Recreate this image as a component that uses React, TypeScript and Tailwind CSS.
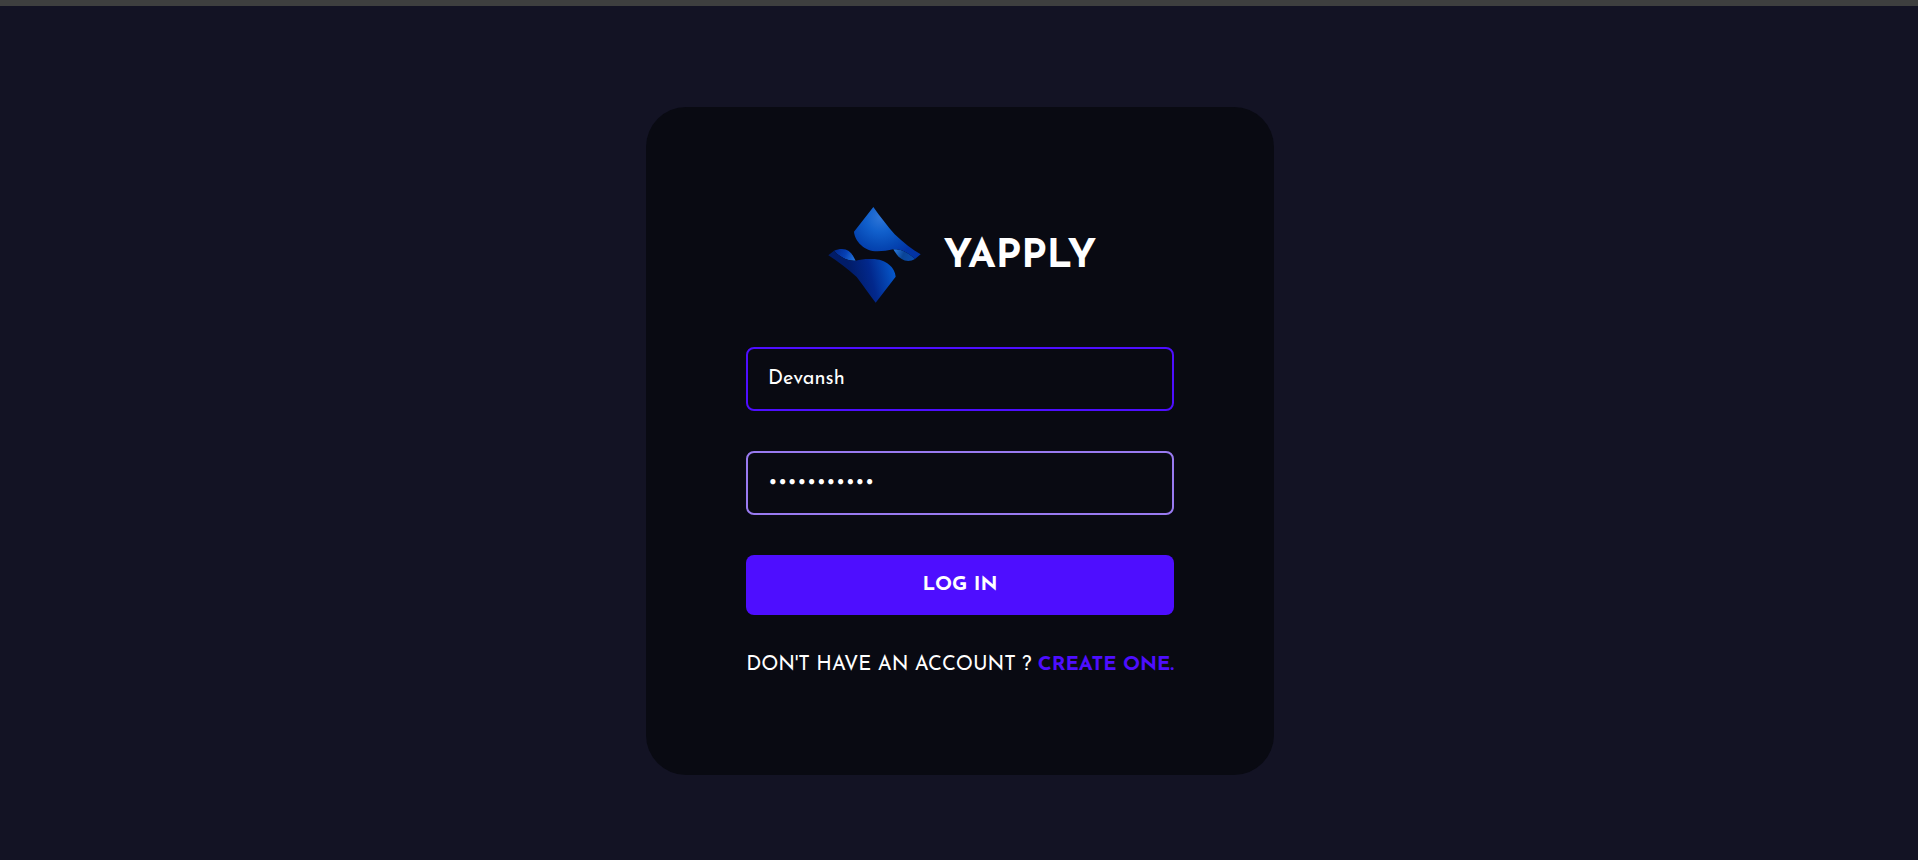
import { useState } from "react";

function Logo() {
  return (
    <svg viewBox="12 21 300 300" className="size-[100px] shrink-0" aria-hidden="true">
      <defs>
        <radialGradient id="top" gradientUnits="userSpaceOnUse" cx="182" cy="52" r="125">
          <stop offset="0" stopColor="#2f76d8" />
          <stop offset="0.35" stopColor="#1160cc" />
          <stop offset="0.7" stopColor="#0648b4" />
          <stop offset="1" stopColor="#0233a4" />
        </radialGradient>
        <linearGradient id="bottom" gradientUnits="userSpaceOnUse" x1="95" y1="240" x2="225" y2="210">
          <stop offset="0" stopColor="#011c68" />
          <stop offset="0.45" stopColor="#02288c" />
          <stop offset="1" stopColor="#0659cc" />
        </linearGradient>
        <linearGradient id="foldRight" gradientUnits="userSpaceOnUse" x1="222" y1="150" x2="285" y2="178">
          <stop offset="0" stopColor="#2a7ce0" />
          <stop offset="0.45" stopColor="#0a4496" />
          <stop offset="1" stopColor="#0a4db0" />
        </linearGradient>
        <linearGradient id="foldLeft" gradientUnits="userSpaceOnUse" x1="45" y1="155" x2="102" y2="182">
          <stop offset="0" stopColor="#022a90" />
          <stop offset="0.5" stopColor="#0640b4" />
          <stop offset="1" stopColor="#2374dc" />
        </linearGradient>
      </defs>
      <path d="M220 148C240 147 262 155 285 177C272 185 256 184 245 177C232 169 226 158 220 148Z" fill="url(#foldRight)" />
      <path
        d="M160 21C180 49 204 80 224 103C249 127 276 149 302 163L285 177C262 155 240 147 220 148C204 151 189 154 172 154C133 154 104 123 102 95Z"
        fill="url(#top)"
      />
      <path d="M42 152C58 145 76 145 86 153C97 161 101 172 107 182C85 184 60 172 42 152Z" fill="url(#foldLeft)" />
      <path
        d="M25 166L42 152C60 172 82 184 107 182C122 178 139 176 157 177C198 177 225 203 227 230L167 308C150 286 132 260 110 231C82 206 51 183 25 166Z"
        fill="url(#bottom)"
      />
    </svg>
  );
}

const fieldClass =
  "h-16 w-full rounded-lg border-2 bg-transparent px-5 text-xl leading-5 text-white outline-none";

export default function App() {
  const [username, setUsername] = useState("Devansh");
  const [password, setPassword] = useState("yapplylogin");

  return (
    <div className="min-h-screen border-t-6 border-[#3e3f3f] bg-[#131324] font-['Josefin_Sans',Lato,sans-serif] text-white">
      <main className="flex justify-center pt-[101px] pr-4 pb-[84px] pl-[18px]">
        <form
          className="flex w-full max-w-[628px] flex-col gap-10 rounded-[40px] bg-[#090a12] p-[100px]"
          onSubmit={(event) => event.preventDefault()}
        >
          <div className="flex items-center justify-center gap-5">
            <Logo />
            <h1 className="text-[40px] leading-none font-bold">YAPPLY</h1>
          </div>
          <input
            type="text"
            aria-label="Username"
            className={`${fieldClass} border-[#4e0eff]`}
            value={username}
            onChange={(event) => setUsername(event.target.value)}
          />
          <input
            type="password"
            aria-label="Password"
            className={`${fieldClass} border-[#997af0]`}
            value={password}
            onChange={(event) => setPassword(event.target.value)}
          />
          <button type="submit" className="h-[60px] rounded-lg bg-[#4e0eff] text-xl leading-5 font-bold">
            LOG IN
          </button>
          <p className="text-center text-xl leading-5 whitespace-nowrap">
            DON'T HAVE AN ACCOUNT ?{" "}
            <a href="#register" className="font-bold text-[#4e0eff]">
              CREATE ONE.
            </a>
          </p>
        </form>
      </main>
    </div>
  );
}
